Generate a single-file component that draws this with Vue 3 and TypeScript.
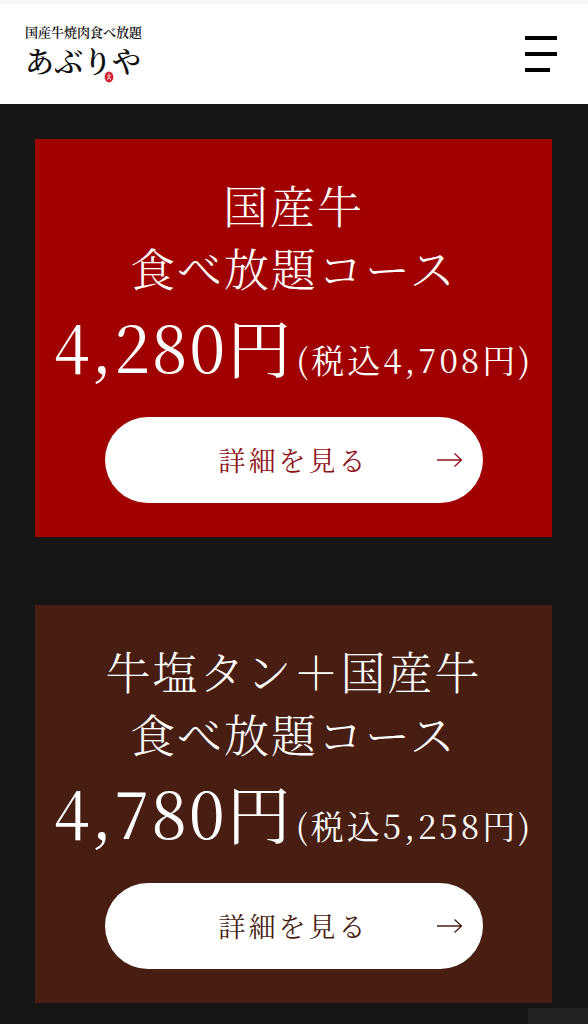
<script setup lang="ts">
interface Course {
  id: string
  theme: 'red' | 'brown'
  title: string[]
  price: string
  taxed: string
}

const courses: Course[] = [
  { id: 'kokusan', theme: 'red', title: ['国産牛', '食べ放題コース'], price: '4,280', taxed: '4,708' },
  { id: 'shiotan', theme: 'brown', title: ['牛塩タン＋国産牛', '食べ放題コース'], price: '4,780', taxed: '5,258' },
]
</script>

<template>
  <div class="page">
    <header class="header">
      <a class="logo" href="#">
        <span class="tagline">国産牛焼肉食べ放題</span>
        <span class="brand">あぶりや</span>
        <svg class="seal" viewBox="0 0 10 12" aria-hidden="true">
          <ellipse cx="5" cy="6" rx="4.4" ry="5.4" fill="#d3202f" />
          <path d="M5 2v2M2.8 4.6h4.4M3.2 9.2 5 5l1.8 4.2M3.6 7.4h2.8" fill="none" stroke="#f7c9cc" stroke-width="0.8" />
        </svg>
      </a>
      <button class="menu" type="button" aria-label="メニュー">
        <span class="bar"></span>
        <span class="bar"></span>
        <span class="bar short"></span>
      </button>
    </header>

    <main class="courses">
      <section v-for="course in courses" :key="course.id" class="card" :class="course.theme">
        <h2 class="title">
          <span v-for="line in course.title" :key="line" class="line">{{ line }}</span>
        </h2>
        <p class="price">{{ course.price }}円<span class="tax">(税込{{ course.taxed }}円)</span></p>
        <a class="detail" :href="'#' + course.id">
          <span class="label">詳細を見る</span>
          <svg class="arrow" viewBox="0 0 26 16" aria-hidden="true">
            <path d="M0 8h24.5M17.5 1.5 24.5 8l-7 6.5" fill="none" stroke="currentColor" stroke-width="1.3" />
          </svg>
        </a>
      </section>
    </main>

    <button class="to-top" type="button" aria-label="ページの先頭へ"></button>
  </div>
</template>

<style>
body {
  margin: 0;
  background: #161616;
}
</style>

<style scoped>
.page {
  min-height: 100vh;
  box-sizing: border-box;
  background: #161616;
  font-family: "Noto Serif CJK JP", "Noto Sans CJK JP", serif;
  font-weight: 400;
}

.header {
  display: flex;
  align-items: center;
  justify-content: space-between;
  height: 104px;
  box-sizing: border-box;
  padding: 0 25px;
  border-top: 4px solid #f6f6fb;
  background: #fff;
}

.logo {
  position: relative;
  display: flex;
  flex-direction: column;
  color: #111;
  text-decoration: none;
}

.tagline {
  font-size: 13px;
  line-height: 14px;
  font-weight: 600;
}

.brand {
  font-size: 29px;
  line-height: 44px;
  font-weight: 600;
}

.seal {
  position: absolute;
  left: 79px;
  bottom: 0;
  width: 10px;
  height: 12px;
}

.menu {
  display: flex;
  flex-direction: column;
  gap: 12px;
  width: 32px;
  margin-right: 6px;
  padding: 0;
  border: 0;
  background: none;
}

.bar {
  height: 4px;
  background: #000;
}

.short {
  width: 25px;
}

.courses {
  display: flex;
  flex-direction: column;
  gap: 68px;
  padding: 35px 36px 21px 35px;
}

.card {
  display: flex;
  flex-direction: column;
  align-items: center;
  padding: 34px 16px;
  color: #fff;
}

.red {
  background: #a00000;
  --accent: #8f1218;
}

.brown {
  background: #481e13;
  --accent: #481e13;
}

.title {
  margin: 0;
  font-size: 45px;
  line-height: 63px;
  font-weight: 300;
  letter-spacing: 2px;
  text-align: center;
}

.line {
  display: block;
  white-space: nowrap;
}

.price {
  margin: 0;
  font-size: 64px;
  line-height: 92px;
  letter-spacing: 2px;
  white-space: nowrap;
}

.tax {
  margin-left: 3px;
  font-size: 33px;
  line-height: 40px;
  letter-spacing: 3px;
}

.detail {
  position: relative;
  display: flex;
  align-items: center;
  justify-content: center;
  width: 378px;
  max-width: 100%;
  height: 86px;
  margin-top: 26px;
  border-radius: 43px;
  background: #fff;
  color: var(--accent);
  text-decoration: none;
}

.label {
  font-size: 27px;
  line-height: 40px;
  letter-spacing: 3px;
}

.arrow {
  position: absolute;
  right: 20px;
  width: 26px;
  height: 16px;
}

.to-top {
  position: fixed;
  right: 0;
  bottom: -44px;
  width: 60px;
  height: 60px;
  padding: 0;
  border: 0;
  background: #222;
}
</style>
